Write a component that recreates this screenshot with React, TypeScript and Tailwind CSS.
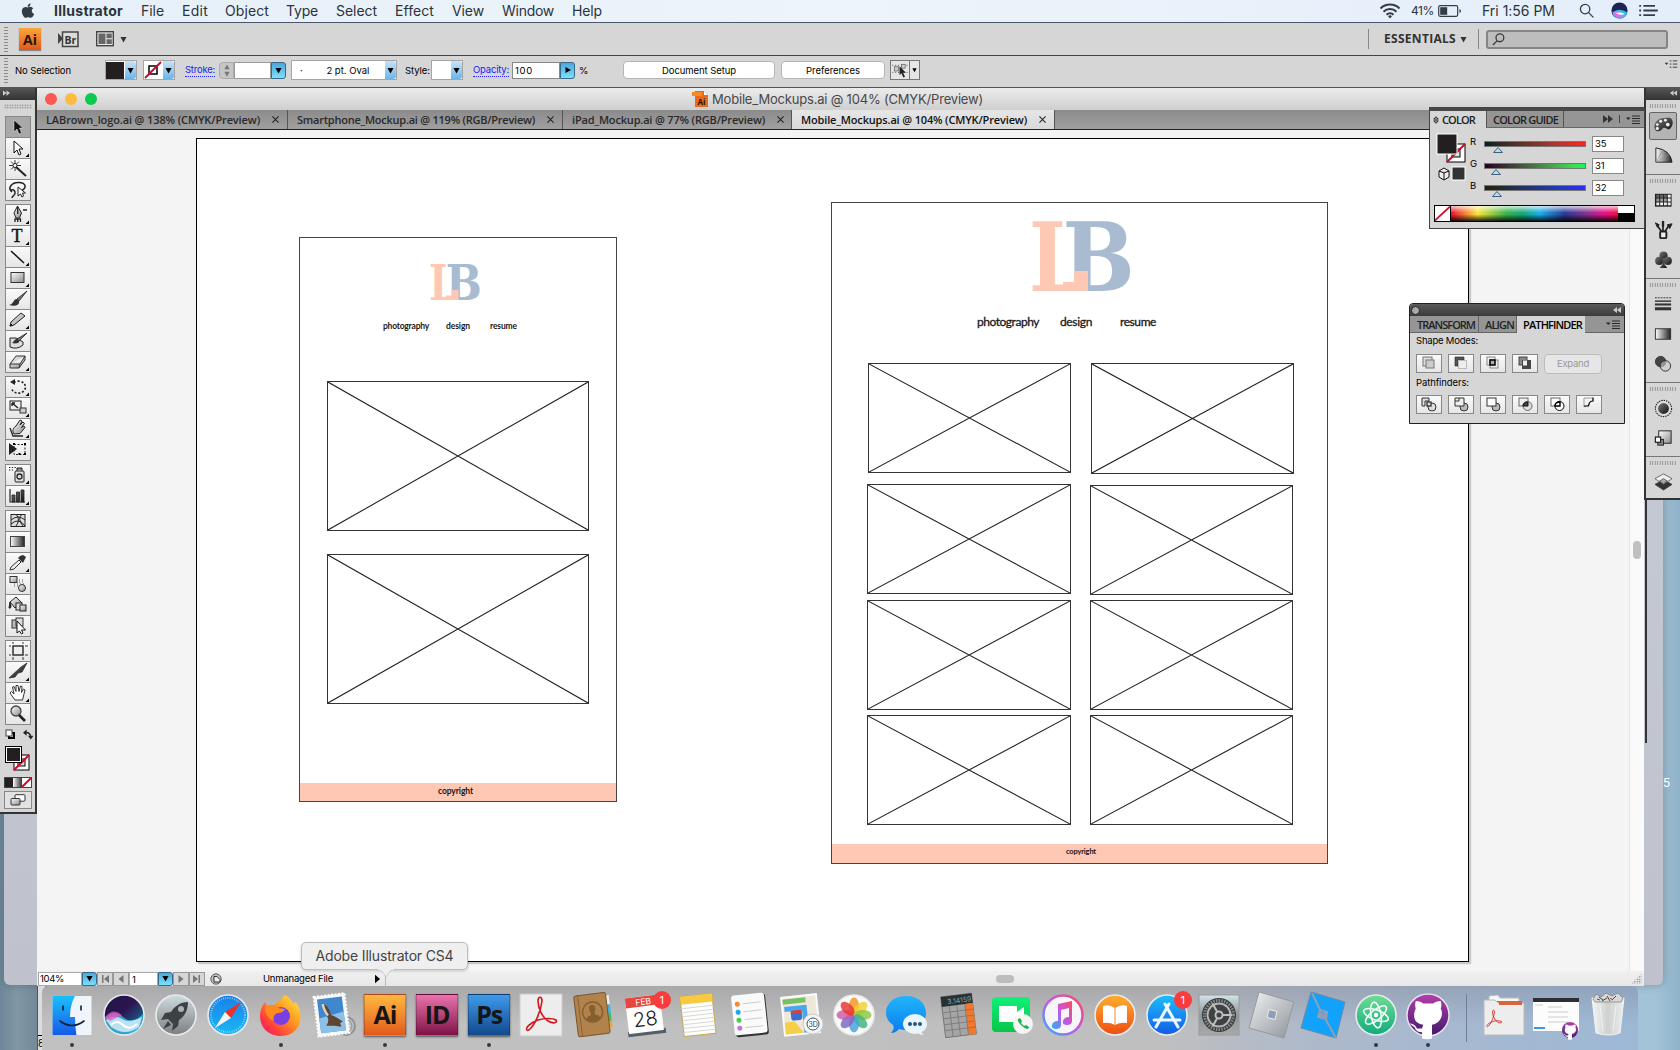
import React, { useLayoutEffect, useRef } from "react";

/* Text run whose tracking is tuned so that it fills a given width. */
function Fit({ w, className = "", children }: { w: number; className?: string; children: string }) {
  const ref = useRef<HTMLSpanElement>(null);
  useLayoutEffect(() => {
    const el = ref.current;
    if (!el) return;
    el.style.letterSpacing = "0px";
    const natural = el.getBoundingClientRect().width;
    el.style.letterSpacing = `${(w - natural) / Math.max(1, children.length)}px`;
  }, [w, children]);
  return (
    <span className={`block shrink-0 whitespace-nowrap ${className}`} style={{ width: w }}>
      <span ref={ref} className="inline-block">{children}</span>
    </span>
  );
}

function Defs() {
  return (
    <svg className="absolute h-0 w-0">
      <defs>
        <linearGradient id="gl" x1="0" y1="0" x2="1" y2="1"><stop offset="0" stopColor="#fff" /><stop offset="1" stopColor="#8a8a8a" /></linearGradient>
        <linearGradient id="gd" x1="0" y1="0" x2="1" y2="1"><stop offset="0" stopColor="#777" /><stop offset="1" stopColor="#111" /></linearGradient>
        <linearGradient id="gh" x1="0" y1="0" x2="1" y2="0"><stop offset="0" stopColor="#fff" /><stop offset="1" stopColor="#222" /></linearGradient>
        <linearGradient id="blue" x1="0" y1="0" x2="0" y2="1"><stop offset="0" stopColor="#1ac0fb" /><stop offset="1" stopColor="#1659e8" /></linearGradient>
        <linearGradient id="saf" x1="0" y1="0" x2="0" y2="1"><stop offset="0" stopColor="#1b7fe8" /><stop offset="1" stopColor="#19b8f5" /></linearGradient>
        <linearGradient id="siri" x1="0" y1="0" x2="1" y2="1"><stop offset="0" stopColor="#221546" /><stop offset=".45" stopColor="#2b1550" /><stop offset="1" stopColor="#128ca6" /></linearGradient>
        <linearGradient id="rocket" x1="0" y1="0" x2="0" y2="1"><stop offset="0" stopColor="#cfdcdf" /><stop offset="1" stopColor="#7d7f80" /></linearGradient>
        <linearGradient id="fox" x1="1" y1="0" x2="0" y2="1"><stop offset="0" stopColor="#fff04a" /><stop offset=".4" stopColor="#ff9a1f" /><stop offset=".75" stopColor="#ff3b3f" /><stop offset="1" stopColor="#e6146e" /></linearGradient>
        <linearGradient id="grn" x1="0" y1="0" x2="0" y2="1"><stop offset="0" stopColor="#12f077" /><stop offset="1" stopColor="#06c548" /></linearGradient>
        <linearGradient id="msg" x1="0" y1="0" x2="0" y2="1"><stop offset="0" stopColor="#22b5fb" /><stop offset="1" stopColor="#0a7df0" /></linearGradient>
        <linearGradient id="note" x1="1" y1="0" x2="0" y2="1"><stop offset="0" stopColor="#fb4a5e" /><stop offset=".5" stopColor="#c355e8" /><stop offset="1" stopColor="#27b5fa" /></linearGradient>
        <linearGradient id="book" x1="0" y1="0" x2="0" y2="1"><stop offset="0" stopColor="#fdb02c" /><stop offset="1" stopColor="#ee4c14" /></linearGradient>
        <linearGradient id="atom" x1="0" y1="0" x2="0" y2="1"><stop offset="0" stopColor="#6fdc96" /><stop offset="1" stopColor="#10ab7c" /></linearGradient>
        <linearGradient id="git" x1="0" y1="0" x2="0" y2="1"><stop offset="0" stopColor="#b43fae" /><stop offset="1" stopColor="#43186a" /></linearGradient>
        <linearGradient id="steel" x1="0" y1="0" x2="0" y2="1"><stop offset="0" stopColor="#d3e4ea" /><stop offset=".5" stopColor="#8d9699" /><stop offset="1" stopColor="#a9a9a9" /></linearGradient>
        <linearGradient id="silver" x1="0" y1="0" x2="1" y2="1"><stop offset="0" stopColor="#f1f3f5" /><stop offset="1" stopColor="#8d9398" /></linearGradient>
        <linearGradient id="trash" x1="0" y1="0" x2="1" y2="0"><stop offset="0" stopColor="#f3f4f4" /><stop offset=".5" stopColor="#cfd1cf" /><stop offset="1" stopColor="#eceeee" /></linearGradient>
      </defs>
    </svg>
  );
}

const Down = ({ className = "" }: { className?: string }) => (
  <svg viewBox="0 0 8 8" className={`h-2 w-2 ${className}`}><path d="M.5 1h7L4 7.5z" fill="currentColor" /></svg>
);

/* ---------- macOS menu bar ---------- */
function MenuBar() {
  const items: [string, number, string][] = [
    ["File", 23, "ml-[18px]"], ["Edit", 26, "ml-[18px]"], ["Object", 44, "ml-[17px]"], ["Type", 32, "ml-[17px]"],
    ["Select", 41, "ml-[18px]"], ["Effect", 39, "ml-[18px]"], ["View", 32, "ml-[18px]"], ["Window", 52, "ml-[18px]"], ["Help", 30, "ml-[18px]"],
  ];
  return (
    <header className="flex h-[23px] shrink-0 items-center border-b border-[#47566a] bg-gradient-to-r from-[#e6f0f9] via-[#edf4fa] to-[#e4eefa] pb-px text-[14px] leading-[22px] text-[#2c333c]">
      <svg viewBox="0 0 24 24" className="ml-[18px] h-[17px] w-[18px] shrink-0" fill="#333b45"><path d="M18.7 12.8c0-2.6 2.1-3.8 2.2-3.9-1.2-1.8-3.1-2-3.7-2-1.6-.2-3.1.9-3.9.9s-2-.9-3.3-.9C8.200 7 6.600 8 5.600 9.500c-1.900 3.100-.5 7.800 1.300 10.300.9 1.300 2 2.700 3.400 2.600 1.400-.1 1.900-.9 3.500-.9s2.100.9 3.500.8c1.500 0 2.400-1.300 3.300-2.500 1-1.500 1.500-2.900 1.500-3-.1 0-3.400-1.200-3.400-4zM16 5.300c.7-.9 1.200-2.100 1.100-3.300-1.100 0-2.300.7-3.100 1.600-.7.8-1.300 2-1.100 3.200 1.200.1 2.400-.6 3.100-1.500z" /></svg>
      <Fit w={69} className="ml-[18px] font-bold">Illustrator</Fit>
      {items.map(([t, w, m]) => <Fit key={t} w={w} className={m}>{t}</Fit>)}
      <div className="grow" />
      <svg viewBox="0 0 22 16" className="h-4 w-[22px]" fill="none" stroke="#333c48" strokeWidth="2"><path d="M1.500 5.500a13.500 13.500 0 0 1 19 0M4.500 8.700a9.300 9.300 0 0 1 13 0M7.500 11.800a5 5 0 0 1 7 0" /><path d="M9 13.200a3 3 0 0 1 4 0L11 15.500z" fill="#333c48" stroke="none" /></svg>
      <Fit w={23} className="ml-[10px] text-[12px]">41%</Fit>
      <svg viewBox="0 0 24 12" className="ml-[4px] h-3 w-6"><rect x=".7" y=".7" width="19" height="10.600" rx="1.500" fill="none" stroke="#333c48" strokeWidth="1.200" /><rect x="2.200" y="2.200" width="7" height="7.600" fill="#333c48" /><path d="M21.500 4v4q1.500-.5 1.500-2t-1.500-2" fill="#333c48" /></svg>
      <Fit w={73} className="ml-[20px]">Fri 1:56 PM</Fit>
      <svg viewBox="0 0 16 16" className="ml-[24px] h-[15px] w-[15px]" fill="none" stroke="#333c48" strokeWidth="1.400"><circle cx="6.500" cy="6.500" r="5" /><path d="m10.300 10.300 5 5" /></svg>
      <svg viewBox="0 0 40 40" className="ml-[17px] h-[17px] w-[17px]"><circle cx="20" cy="20" r="19" fill="#1d2353" /><path d="M3 24q17-12 35 0-3 15-18 15Q5 38 3 24" fill="#2fc0ee" /><path d="M4 27q14-12 22 0t-12 8z" fill="#e26be8" /><path d="M10 26q12-3 22 2-10 5-22-2" fill="#fff" /></svg>
      <svg viewBox="0 0 20 14" className="ml-[11px] mr-[22px] h-[13px] w-[19px]" stroke="#333c48" strokeWidth="2"><path d="M0 2h2M0 7h2M0 12h2M4.500 2H17M4.500 7H20M4.500 12H17" /></svg>
    </header>
  );
}

const Grip = () => <div className="ml-1 h-[26px] w-[4px] shrink-0 bg-[radial-gradient(circle,#8a8a8a_0.7px,transparent_0.9px)] bg-[size:2px_3px]" />;

function AppBar() {
  return (
    <div className="flex h-[33px] shrink-0 items-center border-b border-[#444] bg-[#d6d6d6] text-[#333]">
      <Grip />
      <div className="ml-[11px] flex h-[22px] w-[22px] items-center justify-center bg-gradient-to-b from-[#fba63a] to-[#e0561a] font-['Open_Sans'] text-[14px] font-bold text-[#2a1608] shadow-[0_1px_1px_#888]">Ai</div>
      <svg viewBox="0 0 21 17" className="ml-[17px] h-[17px] w-[21px]"><path d="M0 2v11l5-5.500z" fill="#444" /><rect x="4.500" y="1" width="15.500" height="14.500" fill="#dcdcdc" stroke="#444" strokeWidth="1.500" /><text x="6.500" y="12.500" fontFamily="Open Sans" fontWeight="700" fontSize="10.500" fill="#333">Br</text></svg>
      <svg viewBox="0 0 18 16" className="ml-[17px] h-4 w-[18px]"><rect x=".7" y=".7" width="16.600" height="14" fill="#ececec" stroke="#444" strokeWidth="1.400" /><path d="M2.500 2.500h7v10.500h-7zM10.500 2.500h5.300v4.700h-5.300zM10.500 8.300h5.300v4.700h-5.300z" fill="#666" /></svg>
      <Down className="ml-[6px] h-[7px] w-[7px]" />
      <div className="grow" />
      <div className="h-5 w-px bg-[#888]" />
      <Fit w={72} className="ml-[15px] font-['Open_Sans'] text-[12px] font-bold">ESSENTIALS</Fit>
      <Down className="ml-[4px] h-[7px] w-[7px]" />
      <div className="ml-[11px] h-5 w-px bg-[#888]" />
      <div className="ml-[7px] mr-[12px] flex h-[19px] w-[182px] items-center rounded-[3px] border-2 border-[#858585] bg-[#bdbdbd]">
        <svg viewBox="0 0 14 14" className="ml-[4px] h-[13px] w-[13px]" fill="none" stroke="#3a3a3a" strokeWidth="1.400"><circle cx="8.500" cy="5.200" r="4.200" /><path d="M5.500 8.500 1 13" /></svg>
      </div>
    </div>
  );
}

function BlueDrop({ h = "h-[18px]", play = false, pale = false }: { h?: string; play?: boolean; pale?: boolean }) {
  return (
    <div className={`flex shrink-0 items-center justify-center rounded-r-[3px] ${h} ${pale ? "w-[11px] bg-gradient-to-b from-[#c7e2f8] to-[#68b5ea]" : "w-[15px] border border-[#38688a] bg-gradient-to-b from-[#4aa7dd] to-[#7de0fb]"} text-black`}>
      {play ? <svg viewBox="0 0 8 8" className="h-2 w-2"><path d="M1.500 1v6L7 4z" fill="#000" /></svg> : <Down className="h-[7px] w-[7px]" />}
    </div>
  );
}

function ControlBar() {
  const box = "flex h-5 shrink-0 items-center justify-between border border-[#a5a5a5] bg-white";
  return (
    <div className="flex h-[32px] shrink-0 items-center border-b border-[#555] bg-[#d6d6d6] pb-[3px] text-[9.500px] leading-[13px] text-black">
      <Grip />
      <Fit w={56} className="ml-[7px]">No Selection</Fit>
      <div className={`${box} ml-[34px] w-[32px]`}><div className="h-[17px] w-[18px] bg-[#231f20]" /><BlueDrop pale /></div>
      <div className={`${box} ml-[6px] w-[32px]`}>
        <svg viewBox="0 0 18 18" className="h-[18px] w-[18px]"><rect x="5" y="5" width="8" height="8" fill="none" stroke="#000" strokeWidth="1.500" /><path d="M1 17 17 1" stroke="#cf0a2c" strokeWidth="2" /></svg><BlueDrop pale />
      </div>
      <Fit w={30} className="ml-[10px] border-b border-dotted border-[#22f] text-[#2222f5]">Stroke:</Fit>
      <div className="ml-[4px] flex h-[17px] w-[15px] flex-col items-center justify-center gap-px rounded-l-[4px] border border-[#aaa] bg-[#c6c6c6] text-[#777]"><Down className="h-[6px] w-[6px] rotate-180" /><Down className="h-[6px] w-[6px]" /></div>
      <div className="h-[17px] w-[37px] border border-[#999] bg-white" /><BlueDrop h="h-[17px]" />
      <div className={`${box} ml-[5px] w-[106px]`}><span className="ml-2">·</span><Fit w={43} className="ml-2">2 pt. Oval</Fit><BlueDrop pale /></div>
      <Fit w={25} className="ml-[8px]">Style:</Fit>
      <div className={`${box} ml-[1px] w-[32px] justify-end`}><BlueDrop pale /></div>
      <Fit w={36} className="ml-[10px] border-b border-dotted border-[#22f] text-[#2222f5]">Opacity:</Fit>
      <div className="ml-[3px] h-[17px] w-[48px] border border-[#888] bg-white pl-[2px] pt-px"><Fit w={18}>100</Fit></div><BlueDrop h="h-[17px]" play />
      <Fit w={8} className="ml-[4px]">%</Fit>
      <div className="ml-[36px] flex h-[18px] w-[152px] items-center justify-center rounded-[4px] border border-[#b5b5b5] bg-white"><Fit w={74}>Document Setup</Fit></div>
      <div className="ml-[6px] flex h-[18px] w-[104px] items-center justify-center rounded-[4px] border border-[#b5b5b5] bg-white"><Fit w={54}>Preferences</Fit></div>
      <div className="ml-[5px] flex h-5 w-[30px] border border-[#777] bg-[#e6e6e6]">
        <svg viewBox="0 0 19 18" className="h-[18px] w-[19px] border-r border-[#777]"><path d="M1.500 4h16M1.500 11.500h16" stroke="#444" strokeDasharray="1 2" /><rect x="3.500" y="5.500" width="4.500" height="4.500" fill="#ccc" stroke="#666" strokeWidth=".8" /><rect x="11" y="3" width="4" height="4" fill="#ccc" stroke="#666" strokeWidth=".8" /><path d="M9 5v9.500l2-2 2 4.500 1.800-.8-2-4.200h3z" fill="#222" /></svg>
        <span className="flex grow items-center justify-center"><Down className="h-[6px] w-[5px]" /></span>
      </div>
      <svg viewBox="0 0 14 10" className="mb-[12px] ml-auto mr-[2px] h-[9px] w-[14px]" stroke="#333"><path d="M0 3h4L2 5.500z" fill="#333" stroke="none" /><path d="M5.500 1h2M9 1h5M5.500 4.500h2M9 4.500h5M5.500 8h2M9 8h5" /></svg>
    </div>
  );
}

/* ---------- tool icons, drawn in a 24x20 box ---------- */
const tools: Record<string, React.ReactNode> = {
  select: <path d="M8 3v12l3-3 2 5 2.500-1-2-5H17z" fill="#111" stroke="#eee" strokeWidth=".5" />,
  direct: <path d="M8 3v12l3-3 2 5 2-1-2-5h4z" fill="#fff" stroke="#111" />,
  wand: <g stroke="#222"><path d="M10 8l10 9" strokeWidth="2" /><path d="M9 1v11M3 6.500h12M5 2.500l8 8M13 2.500l-8 8" strokeWidth=".9" /><circle cx="9" cy="6.500" r="2" fill="#fff" /></g>,
  lasso: <g stroke="#222"><path d="M6 12C1 8 6 2 13 2.500s8 5 3 8M6 12c-3-2 2-4 3 0s-3 3-3 6" fill="none" strokeWidth="1.500" /><path d="M12 7v9l2.500-2 1.500 3 1.500-1-1-3h3z" fill="#fff" /></g>,
  pen: <g stroke="#222"><path d="M11.500 1 8 8l2 5h3.500l2-5z" fill="url(#gl)" /><path d="M11.700 2v7M9 17v-3h5.500v3M11.700 14v3M17 5h4" fill="none" strokeWidth="1.300" /></g>,
  type: <text x="5.500" y="16" fontFamily="Liberation Serif" fontSize="18" fill="#111" stroke="#111" strokeWidth=".4">T</text>,
  line: <path d="M5 4l13 12" stroke="#111" strokeWidth="1.500" />,
  rect: <rect x="5" y="4.500" width="13" height="10" fill="url(#gl)" stroke="#333" />,
  brush: <g><path d="M21 2 11 10l2 2z" fill="#777" stroke="#222" strokeWidth=".8" /><path d="M11 10c-4 0-3 5-8 6 6 2 11 0 10-4z" fill="#333" /></g>,
  pencil: <g stroke="#222"><path d="M5 12 15 3l4 3L8 15l-4 1z" fill="url(#gl)" /><path d="M4 16l1-2 1.500 1.500z" fill="#111" /></g>,
  blob: <g><path d="M4 7h6l7 4v3q-6 5-13 2z" fill="#ddd" stroke="#222" /><path d="M21 2 11 8l2 2z" fill="#777" stroke="#222" strokeWidth=".8" /><path d="M11 8c-3 0-3 3-5 4 4 1 8 0 7-2z" fill="#333" /></g>,
  eraser: <path d="M4 12 10 4h9l-5 8zM4 12v4h9l6-8V4M14 12l-1 4" fill="url(#gl)" stroke="#333" />,
  rotate: <g fill="none" stroke="#222" strokeWidth="1.600"><path d="M8 5.500a7 6 0 1 1-2 7" strokeDasharray="2 1.800" /><path d="M4 5l5-3v6z" fill="#222" stroke="none" /></g>,
  scale: <g stroke="#222"><rect x="4" y="3" width="11" height="9" fill="#eee" /><path d="M6 5l6 5M6 5h3M6 5v3" strokeWidth="1.400" /><rect x="14" y="10" width="6" height="5" fill="#ccc" opacity=".9" /></g>,
  warp: <g stroke="#222"><path d="M8 15c-2-3-1-6 2-8l4-6 2 1-2 4 3-3 1.500 1.500-3 4 2.500-1.500 1 1.500-5 6z" fill="url(#gl)" /><path d="M4 9l3 8h10" fill="none" strokeWidth="1.300" /></g>,
  free: <g><rect x="8" y="4.500" width="11" height="10" fill="none" stroke="#222" strokeDasharray="2 1.500" /><path d="M3 3v12l8-6z" fill="#222" /><path d="M7 3h2v2H7zM18 3h2v2h-2zM18 13h2v2h-2zM12.500 13h2v2h-2z" /></g>,
  spray: <g><rect x="9" y="6" width="9" height="11" rx="1" fill="#ddd" stroke="#222" /><path d="M11 6V3h5v3" fill="#888" stroke="#222" /><circle cx="13.500" cy="11.500" r="2.500" fill="none" stroke="#222" strokeWidth="1.300" /><path d="M3 2.500h7M3 5h5" stroke="#222" strokeDasharray="1.300 1.500" /></g>,
  graph: <g stroke="#222" strokeWidth=".8"><path d="M4 3v13h15" fill="none" strokeWidth="1.200" /><path d="M6 9h3v7H6zM10.500 6h3v10h-3zM15 4h3v12h-3z" fill="url(#gd)" /></g>,
  mesh: <g fill="none" stroke="#222"><rect x="5" y="3.500" width="14" height="12" fill="#ddd" /><path d="M5 9q7-6 14 0M5 13q8-7 14 2M10 3q5 6 0 12M16 3q-5 5 1 12" /></g>,
  gradient: <rect x="4.500" y="4.500" width="14" height="10" fill="url(#gh)" stroke="#444" />,
  eyedrop: <g><path d="M4 17l1-3 8-7 2 2-7 7z" fill="#eee" stroke="#333" /><path d="M12 5l5 5 1-2 2-4-3-2-3 1z" fill="#333" /></g>,
  blend: <g><rect x="4" y="2.500" width="7" height="6" fill="url(#gl)" stroke="#333" /><path d="M8 10h10M8 12h6M13 6h6M13 8h6" stroke="#555" strokeDasharray="1 2" /><circle cx="16" cy="14" r="3.500" fill="url(#gl)" stroke="#333" /></g>,
  live: <g stroke="#222"><path d="M10 2 16 8l-7 5-5-6z" fill="url(#gl)" /><path d="M4 7l-1 6q2 1 2-2z" fill="#222" /><rect x="10" y="8" width="6" height="7" fill="#ddd" /><rect x="14" y="10" width="6" height="6" fill="url(#gl)" /></g>,
  livesel: <g stroke="#333"><rect x="6" y="4" width="8" height="8" fill="#bbb" /><rect x="10" y="2" width="7" height="8" fill="#ddd" /><path d="M11 5v12l2.500-2 2 3 1.500-1-1.500-3h4z" fill="#fff" stroke="#111" /></g>,
  artboard: <g fill="none" stroke="#333"><rect x="7" y="5" width="10" height="9" fill="#eee" strokeWidth="1.500" /><path d="M7 1v2M17 1v2M7 16v3M17 16v3M3 5h2M3 14h2M19 5h3M19 14h3" /></g>,
  slice: <path d="M3 16 15 5l6-4-5 9-4 1-3 4z" fill="url(#gd)" stroke="#222" strokeWidth=".7" />,
  hand: <path d="M9 17 4 10l1.500-1.500L8 11 6.500 4 8 3.500l2 5 0-6h2l1 6 1.500-5.500 1.500.5-.5 6 2-3.500 1.500 1-2.500 10z" fill="#fff" stroke="#333" />,
  zoom: <g><circle cx="10" cy="7" r="5" fill="url(#gl)" stroke="#444" strokeWidth="1.300" /><path d="M13 11l6 6" stroke="#222" strokeWidth="2.600" /></g>,
};

const toolGroups = [
  ["select", "direct.", "wand", "lasso"],
  ["pen.", "type.", "line.", "rect.", "brush", "pencil.", "blob", "eraser."],
  ["rotate.", "scale.", "warp.", "free"],
  ["spray.", "graph."],
  ["mesh", "gradient", "eyedrop.", "blend", "live", "livesel"],
  ["artboard", "slice.", "hand.", "zoom"],
];

function Toolbar() {
  return (
    <aside className="flex h-[726px] w-[37px] shrink-0 flex-col items-start border-b-2 border-r-2 border-[#333] bg-[#d6d6d6]">
      <div className="h-[12px] w-full bg-gradient-to-b from-[#555] to-[#333]"><svg viewBox="0 0 8 6" className="ml-[3px] h-[10px] w-[7px]"><path d="M0 0v6l4-3zM4 0v6l4-3z" fill="#ccc" /></svg></div>
      <div className="ml-1 mt-[4px] h-[5px] w-[28px] bg-[radial-gradient(circle,#888_0.7px,transparent_0.9px)] bg-[size:2.500px_2.500px]" />
      <div className="ml-[5px] mt-[7px] flex flex-col gap-[3px]">
        {toolGroups.map((g, i) => (
          <div key={i} className="flex w-[26px] flex-col border border-t-0 border-[#888]">
            {g.map((t) => {
              const name = t.replace(".", "");
              return (
                <div key={t} className={`h-[21px] border-t border-[#888] ${t === "select" ? "bg-[#a8a8a8]" : "bg-gradient-to-b from-[#fafafa] to-[#e6e6e6]"}`}>
                  <svg viewBox="0 0 24 20" className="h-[20px] w-[24px]">{tools[name]}{t.endsWith(".") && <path d="M23 15.500v3.500h-3.500z" fill="#000" />}</svg>
                </div>
              );
            })}
          </div>
        ))}
      </div>
      <div className="ml-[5px] mt-[4px] flex w-[28px] justify-between">
        <svg viewBox="0 0 11 11" className="h-[11px] w-[11px]"><rect x="4" y="4" width="5" height="5" fill="none" stroke="#000" strokeWidth="2" /><rect x="1" y="1" width="6" height="6" fill="#fff" stroke="#444" /></svg>
        <svg viewBox="0 0 11 11" className="h-[11px] w-[10px]"><path d="M2 3.500q6-1 6.500 5" fill="none" stroke="#222" strokeWidth="1.600" /><path d="M0 3.500 4 0v7zM5.500 7h6l-3 4z" fill="#222" /></svg>
      </div>
      <svg viewBox="0 0 27 27" className="ml-[5px] mt-[6px] h-[27px] w-[27px]">
        <rect x="9" y="9" width="15" height="15" fill="#fff" stroke="#000" /><rect x="13" y="13" width="7" height="7" fill="#ddd" stroke="#000" /><path d="M9 24 24 9" stroke="#cf0a2c" strokeWidth="2" />
        <rect x=".5" y=".5" width="16" height="16" fill="#fff" stroke="#000" /><rect x="2" y="2" width="13" height="13" fill="#231f20" />
      </svg>
      <div className="ml-[4px] mt-[4px] flex h-[11px] w-[28px] border border-[#444]"><div className="grow bg-[#231f20]" /><div className="w-[9px] bg-gradient-to-r from-white to-[#333]" /><svg viewBox="0 0 9 9" className="h-[9px] w-[9px] bg-white"><path d="M0 9 9 0" stroke="#cf0a2c" strokeWidth="2" /></svg></div>
      <div className="ml-[4px] mt-[3px] flex h-[18px] w-[28px] items-center justify-center border border-[#888] bg-[#e2e2e2]"><svg viewBox="0 0 16 12" className="h-[12px] w-4" stroke="#333"><rect x="5" y=".7" width="10" height="6.500" rx="1" fill="#fff" /><rect x="1" y="4.500" width="9" height="6.500" rx="1" fill="url(#gl)" /></svg></div>
    </aside>
  );
}

/* ---------- artwork ---------- */
function Wire({ className }: { className: string }) {
  return (
    <div className={`absolute border border-[#333] ${className}`}>
      <svg viewBox="0 0 100 100" preserveAspectRatio="none" className="h-full w-full" stroke="#222" strokeWidth="1.100"><path d="M0 0 100 100M100 0 0 100" vectorEffect="non-scaling-stroke" /></svg>
    </div>
  );
}

function Logo({ className }: { className: string }) {
  return (
    <svg viewBox="0 0 102 70" className={`absolute overflow-visible ${className}`}>
      <text transform="translate(-4 70) scale(.82 1)" fontFamily="DejaVu Serif" fontWeight="700" fontSize="96" fill="#ffc8b4">L</text>
      <rect x="38" y="30" width="20" height="31" fill="#fff" />
      <text transform="translate(29.500 70) scale(.89 1)" fontFamily="DejaVu Serif" fontWeight="700" fontSize="96" fill="#a8bbd0">B</text>
      <path d="M30 70V61H41V50H55V70z" fill="#ffc8b4" />
    </svg>
  );
}

function Artwork() {
  const nav = "absolute font-['Lato'] text-[#1a1718]";
  const navLg = `${nav} text-[12px] leading-[16px] [-webkit-text-stroke:0.3px_#1a1718]`;
  return (
    <div className="relative grow overflow-hidden bg-[#f4f4f4]">
      {/* artboard */}
      <div className="absolute left-[159px] top-[8px] h-[824px] w-[1273px] border-[1.500px] border-black bg-white shadow-[2px_2px_1px_#c9c9c9]" />
      {/* phone mockup */}
      <div className="absolute left-[262px] top-[107px] h-[565px] w-[318px] border border-[#444]">
        <div className="absolute bottom-0 left-0 h-[18px] w-full bg-[#ffc8b4]" />
        <Logo className="left-[131px] top-[27px] h-[35px] w-[51px]" />
        <Fit w={46} className={`${nav} left-[83px] top-[82px] text-[8.500px] leading-[12px] font-bold`}>photography</Fit>
        <Fit w={24} className={`${nav} left-[146px] top-[82px] text-[8.500px] leading-[12px] font-bold`}>design</Fit>
        <Fit w={27} className={`${nav} left-[190px] top-[82px] text-[8.500px] leading-[12px] font-bold`}>resume</Fit>
        <Wire className="left-[27px] top-[143px] h-[150px] w-[262px]" />
        <Wire className="left-[27px] top-[316px] h-[150px] w-[262px]" />
        <Fit w={35} className={`${nav} bottom-[4px] left-[138px] text-[8.500px] leading-[12px] font-bold`}>copyright</Fit>
      </div>
      {/* tablet mockup */}
      <div className="absolute left-[794px] top-[72px] h-[662px] w-[497px] border border-[#444]">
        <div className="absolute bottom-0 left-0 h-[19px] w-full bg-[#ffc8b4]" />
        <Logo className="left-[201px] top-[18px] h-[70px] w-[102px]" />
        <Fit w={62} className={`${navLg} left-[145px] top-[111px]`}>photography</Fit>
        <Fit w={32} className={`${navLg} left-[228px] top-[111px]`}>design</Fit>
        <Fit w={36} className={`${navLg} left-[288px] top-[111px]`}>resume</Fit>
        <Wire className="left-[36px] top-[160px] h-[110px] w-[203px]" />
        <Wire className="left-[259px] top-[160px] h-[111px] w-[203px]" />
        <Wire className="left-[35px] top-[281px] h-[110px] w-[204px]" />
        <Wire className="left-[258px] top-[282px] h-[110px] w-[203px]" />
        <Wire className="left-[35px] top-[397px] h-[110px] w-[204px]" />
        <Wire className="left-[258px] top-[397px] h-[110px] w-[203px]" />
        <Wire className="left-[35px] top-[512px] h-[110px] w-[204px]" />
        <Wire className="left-[258px] top-[512px] h-[110px] w-[203px]" />
        <Fit w={30} className={`${nav} bottom-[6px] left-[234px] text-[7.500px] leading-[10px] font-bold`}>copyright</Fit>
      </div>
    </div>
  );
}

function DocumentWindow() {
  const tabs: [string, number, string, boolean][] = [
    ["LABrown_logo.ai @ 138% (CMYK/Preview)", 214, "w-[251px] pl-[9px]", false],
    ["Smartphone_Mockup.ai @ 119% (RGB/Preview)", 238, "w-[275px] pl-[9px]", false],
    ["iPad_Mockup.ai @ 77% (RGB/Preview)", 193, "w-[229px] pl-[9px]", false],
    ["Mobile_Mockups.ai @ 104% (CMYK/Preview)", 226, "w-[263px] pl-[9px]", true],
  ];
  return (
    <main className="flex h-[898px] w-[1607px] shrink-0 flex-col bg-[#ececec]">
      <div className="flex h-[22px] items-center bg-gradient-to-b from-[#ececec] to-[#cfcfcf]">
        <div className="ml-[8px] flex gap-[8px]"><i className="h-[12px] w-[12px] rounded-full bg-[#fc5753]" /><i className="h-[12px] w-[12px] rounded-full bg-[#fdbc40]" /><i className="h-[12px] w-[12px] rounded-full bg-[#09c94f]" /></div>
        <svg viewBox="0 0 16 16" className="ml-[595px] h-4 w-4"><path d="M3 0h9l4 4v12H3z" fill="#ea6a1c" /><path d="M0 1h10v4H0z" fill="#f58a2b" /><path d="M12 0v4h4z" fill="#fff" /><text x="5.500" y="13.500" fontSize="8" fontWeight="700" fontFamily="Open Sans" fill="#22120a">Ai</text></svg>
        <Fit w={271} className="ml-[4px] text-[13px] leading-[20px] text-[#484848]">Mobile_Mockups.ai @ 104% (CMYK/Preview)</Fit>
      </div>
      <div className="flex h-[20px] shrink-0 border-b border-[#222] bg-gradient-to-b from-[#8b8b8b] to-[#a0a0a0] font-['Open_Sans'] text-[11px] font-semibold leading-[18px] text-[#2a2a2a]">
        {tabs.map(([t, w, c, on]) => (
          <div key={t} className={`flex shrink-0 items-center border-r border-[#555] ${c} ${on ? "bg-gradient-to-b from-[#e6e6e6] to-[#d9d9d9] text-[#111]" : ""}`}>
            <Fit w={w}>{t}</Fit>
            <svg viewBox="0 0 8 8" className="ml-[12px] h-[7px] w-[7px] shrink-0" stroke="#222" strokeWidth="1.200"><path d="M.5.5l7 7M7.500.5l-7 7" /></svg>
          </div>
        ))}
      </div>
      <div className="flex h-[841px] shrink-0">
        <Artwork />
        <div className="flex w-[15px] shrink-0 flex-col items-center border-l border-[#e4e4e4] bg-[#fafafa] pt-[411px]"><div className="h-[18px] w-[8px] rounded-full bg-[#c0c0c0]" /></div>
      </div>
      <StatusBar />
    </main>
  );
}

function StatusBar() {
  const nav = "flex h-[14px] w-4 items-center justify-center border border-[#999] bg-[#d6d6d6] text-[#777]";
  return (
    <div className="flex h-[15px] shrink-0 items-center bg-gradient-to-b from-[#f0f0f0] to-[#e7e7e7] pl-px text-[9.500px] leading-[13px] text-black">
      <div className="flex h-[14px] w-[44px] items-center border border-[#aaa] bg-white pl-px"><Fit w={24}>104%</Fit></div>
      <BlueDrop h="h-[14px]" />
      <div className={nav}><svg viewBox="0 0 8 8" className="h-2 w-2"><path d="M1 0h1.500v8H1zM8 0v8L3 4z" fill="#777" /></svg></div>
      <div className={nav}><svg viewBox="0 0 8 8" className="h-2 w-2"><path d="M6.500 0v8l-5-4z" fill="#777" /></svg></div>
      <div className="h-[14px] w-[29px] border border-[#aaa] bg-white pl-[2px]">1</div>
      <BlueDrop h="h-[14px]" />
      <div className={nav}><svg viewBox="0 0 8 8" className="h-2 w-2"><path d="M1.500 0v8l5-4z" fill="#777" /></svg></div>
      <div className={nav}><svg viewBox="0 0 8 8" className="h-2 w-2"><path d="M7 0H5.500v8H7zM0 0v8l5-4z" fill="#777" /></svg></div>
      <svg viewBox="0 0 12 12" className="ml-[5px] h-3 w-3"><circle cx="6" cy="6" r="5.200" fill="#bbb" stroke="#666" /><path d="M4 3.500h3l3 3V9H4z" fill="#eee" stroke="#333" /></svg>
      <Fit w={70} className="ml-[41px]">Unmanaged File</Fit>
      <svg viewBox="0 0 6 10" className="ml-[42px] h-[10px] w-[5px]"><path d="M0 0v10l6-5z" /></svg>
      <div className="ml-[5px] h-[15px] w-px bg-[#bbb]" />
      <div className="ml-[610px] h-[8px] w-[18px] rounded-full bg-[#bdbdbd]" />
      <div className="ml-auto mr-[2px] h-[11px] w-[11px] bg-[radial-gradient(circle,#777_0.7px,transparent_0.9px)] bg-[size:2.500px_2.500px] [clip-path:polygon(100%_0,100%_100%,0_100%)]" />
    </div>
  );
}

/* ---------- right icon dock ---------- */
const dockSections: { h: string; icons: React.ReactNode[] }[] = [
  { h: "h-[75px]", icons: [
    <g><path d="M12 2C5 2 1 7 1.500 12s6 5 8 2 4-1 6 0 6-4 5-8.500S16 2 12 2" fill="url(#gd)" /><g fill="#eee"><circle cx="4.500" cy="13" r="1.600" /><circle cx="4.500" cy="9" r="1.400" /><circle cx="8" cy="5.500" r="1.600" /><circle cx="13" cy="4.500" r="1.500" /><circle cx="15.500" cy="9" r="2" /></g></g>,
    <g><path d="M3 3v15h17Q18 5 3 3" fill="url(#gh)" stroke="#222" /><path d="M3 18 11 5M3 18l14-8" stroke="#888" strokeWidth=".7" /></g> ] },
  { h: "h-[104px]", icons: [
    <g><rect x="2" y="4" width="17.500" height="13.500" fill="#222" /><path d="M3.500 9h3v3h-3zM7.500 9h3v3h-3zM11.500 9h3v3h-3z" fill="#999" /><path d="M3.500 5h3v3h-3zM7.500 5h3v3h-3zM11.500 5h3v3h-3z" fill="#666" /><path d="M15.500 5h3v3h-3zM15.500 9h3v3h-3zM3.500 13h3v3h-3zM7.500 13h3v3h-3zM11.500 13h3v3h-3zM15.500 13h3v3h-3z" fill="#f2f2f2" /></g>,
    <g stroke="#222"><path d="M9 12 4.500 6M10.500 12V3M12.500 12l4-6" strokeWidth="1.800" /><path d="M2.500 3l4 2-2 2.500zM15 5l5-1-2.500 5z" fill="#222" /><path d="M10.500 1v6" strokeWidth="2.500" /><rect x="7.500" y="12" width="6.500" height="7" rx="1" fill="#eee" strokeWidth="2" /></g>,
    <g fill="url(#gd)"><circle cx="11" cy="6" r="4.300" /><circle cx="6.500" cy="11.500" r="4.300" /><circle cx="15.500" cy="11.500" r="4.300" /><path d="M10 9h2l0 6 3 4H7l3-4z" /></g> ] },
  { h: "h-[104px]", icons: [
    <g stroke="#333"><path d="M2 4h17" strokeDasharray="2 1" /><path d="M2 7.500h17" strokeWidth="1.500" /><path d="M2 11h17" strokeWidth="2.200" /><path d="M2 15.500h17" strokeWidth="3.200" /></g>,
    <rect x="2.500" y="5" width="16" height="11" fill="url(#gh)" stroke="#333" />,
    <g stroke="#333"><circle cx="8" cy="8" r="5.500" fill="#444" /><circle cx="13" cy="12.500" r="5.500" fill="#ccc" fillOpacity=".6" /></g> ] },
  { h: "h-[74px]", icons: [
    <g><circle cx="11" cy="11" r="8.500" fill="#ddd" stroke="#222" strokeWidth="1.200" strokeDasharray="1.500 1" /><circle cx="11" cy="11" r="5.700" fill="url(#gd)" /></g>,
    <g stroke="#222"><rect x="6" y="3" width="13" height="13" fill="url(#gl)" /><rect x="5" y="12" width="6" height="6" fill="#888" /><rect x="2.500" y="9.500" width="5.500" height="5.500" fill="#fff" strokeWidth="1.300" /></g> ] },
  { h: "h-[44px]", icons: [
    <g stroke="#333" strokeWidth=".7"><path d="M11 8l9 5-9 6-9-6z" fill="#333" /><path d="M11 2l9 5-9 6-9-6z" fill="#f3f3f3" fillOpacity=".9" /><path d="M11 7l4 2.500-4 3-4-3z" fill="#aaa" /></g> ] },
];

function PanelDock() {
  return (
    <aside className="h-[412px] w-[36px] shrink-0 border-b-2 border-l-2 border-[#333] bg-[#d6d6d6]">
      <div className="flex h-[12px] justify-end bg-gradient-to-b from-[#555] to-[#333]"><svg viewBox="0 0 8 6" className="mr-[3px] h-[10px] w-[7px]"><path d="M4 0v6L0 3zM8 0v6L4 3z" fill="#ccc" /></svg></div>
      {dockSections.map((s, i) => (
        <section key={i} className={`${s.h} ${i < 4 ? "border-b border-[#777]" : ""} flex flex-col items-center`}>
          <div className="mt-[4px] h-[4px] w-[28px] shrink-0 bg-[radial-gradient(circle,#888_0.7px,transparent_0.9px)] bg-[size:2.500px_2px]" />
          <div className={`flex flex-col ${i === 0 ? "mt-[4px]" : "mt-[2px]"}`}>
            {s.icons.map((ic, k) => (
              <div key={k} className={`flex w-[28px] items-center justify-center ${i === 0 && k === 0 ? "h-[28px] rounded-[2px] border border-[#666] bg-[#b5b5b5]" : "h-[30px]"}`}>
                <svg viewBox="0 0 22 21" className="h-[20px] w-[21px]">{ic}</svg>
              </div>
            ))}
          </div>
        </section>
      ))}
    </aside>
  );
}

/* ---------- floating panels ---------- */
const MenuGlyph = ({ className = "" }: { className?: string }) => (
  <svg viewBox="0 0 14 9" className={`h-[9px] w-[14px] shrink-0 ${className}`} stroke="#222"><path d="M0 2.500h4.500L2.200 5z" fill="#222" stroke="none" /><path d="M6 1h8M6 3.500h8M6 6h8M6 8.500h8" strokeWidth=".9" /></svg>
);

function ColorPanel() {
  const rows: [string, string, string, string][] = [
    ["R", "35", "bg-gradient-to-r from-[#001f20] to-[#ff1f20]", "ml-[9px]"],
    ["G", "31", "bg-gradient-to-r from-[#230020] to-[#00ff50]", "ml-[7px]"],
    ["B", "32", "bg-gradient-to-r from-[#231f00] to-[#2c2cff]", "ml-[8px]"],
  ];
  return (
    <div className="absolute left-[1429px] top-[107px] flex h-[122px] w-[216px] flex-col border border-[#444] bg-[#d6d6d6] font-['Open_Sans']">
      <div className="h-[3px] bg-[#484848]" />
      <div className="flex h-[17px] shrink-0 border-b border-[#666] bg-[#959595] text-[11px] font-semibold leading-[17px] text-[#222]">
        <div className="flex h-[17px] w-[56px] items-center bg-[#d6d6d6] pl-[3px]"><svg viewBox="0 0 6 9" className="mr-[3px] h-[8px] w-[6px]" fill="none" stroke="#111"><path d="M.5 3.500 3 .8l2.500 2.700zM.5 5.500 3 8.200l2.500-2.700z" /></svg><Fit w={33}>COLOR</Fit></div>
        <div className="w-[78px] border-x border-[#555] pl-[6px]"><Fit w={65}>COLOR GUIDE</Fit></div>
        <div className="flex grow items-center justify-end"><svg viewBox="0 0 10 8" className="h-2 w-[10px]"><path d="M0 0v8l5-4zM5 0v8l5-4z" fill="#333" /></svg><div className="mx-[6px] h-2 w-px bg-[#444]" /><MenuGlyph className="mr-[4px]" /></div>
      </div>
      <div className="flex pt-[5px]">
        <svg viewBox="0 0 32 50" className="ml-[6px] h-[50px] w-[32px] shrink-0">
          <rect x="11" y="11" width="18" height="18" fill="#fff" stroke="#000" /><rect x="16" y="16" width="8" height="8" fill="#ddd" stroke="#000" /><path d="M11 29 29 11" stroke="#cf0a2c" strokeWidth="2" />
          <rect x="1" y="1" width="20" height="20" fill="#231f20" stroke="#fff" />
          <path d="M3 38l5-3 5 3v6l-5 3-5-3zM3 38l5 2 5-2M8 40v7" fill="#eee" stroke="#111" /><rect x="16" y="34" width="13" height="13" fill="#333" stroke="#fff" />
        </svg>
        <div className="ml-[2px] flex flex-col text-[9.500px] leading-[14px] text-black">
          {rows.map(([l, v, g, m]) => (
            <div key={l} className="flex h-[22px] w-[160px] items-start font-['Inter']">
              <span className="w-[14px] pt-[2px]">{l}</span>
              <div className="w-[102px] pt-[8px]"><div className={`h-[6px] border border-[#777] ${g}`} /><svg viewBox="0 0 10 6" className={`h-[6px] w-[10px] ${m}`}><path d="M5 .5 9.500 5.500h-9z" fill="#b5dcf4" stroke="#3f5f78" /></svg></div>
              <div className="ml-[6px] mt-[3px] h-[16px] w-[32px] border border-[#888] bg-white pl-[2px]">{v}</div>
            </div>
          ))}
        </div>
      </div>
      <div className="ml-[4px] mt-[6px] flex h-[17px] w-[201px] shrink-0 border border-black">
        <svg viewBox="0 0 16 15" className="h-[15px] w-4 border-r border-black bg-white"><path d="M0 15 16 0" stroke="#cf0a2c" strokeWidth="1.800" /></svg>
        <div className="grow bg-[linear-gradient(to_bottom,rgba(255,255,255,.75),transparent_45%,transparent_55%,rgba(0,0,0,.85)),linear-gradient(to_right,#f01030,#fbe63c_16%,#39b54a_33%,#18a878_43%,#18b0ea_53%,#2a3a98_68%,#8a3090_82%,#e8128a_92%,#f01040)]" />
        <div className="h-full w-[16px] bg-gradient-to-b from-white from-50% to-black to-50%" />
      </div>
    </div>
  );
}

function PathfinderPanel() {
  const modes = [
    <g><rect x="3" y="2" width="9" height="9" fill="#ddd" stroke="#777" /><rect x="6" y="5" width="8" height="8" fill="#ccc" stroke="#777" /></g>,
    <g><path d="M3 2h9v3H6v6H3z" fill="#555" stroke="#222" strokeWidth=".6" /><rect x="6.500" y="5.500" width="8" height="8" fill="#eee" stroke="#bbb" /></g>,
    <g><rect x="3" y="2" width="8" height="8" fill="#eee" stroke="#888" /><rect x="6" y="5" width="8" height="8" fill="#eee" stroke="#888" /><rect x="6" y="5" width="5" height="5" fill="#aaa" stroke="#000" strokeWidth="1.500" /></g>,
    <g><rect x="3" y="2" width="8" height="8" fill="#888" stroke="#444" /><rect x="6" y="5" width="9" height="9" fill="#444" /><rect x="7" y="5.500" width="4" height="5" fill="#eee" /></g>,
  ];
  const finders = [
    <g fill="#ddd" stroke="#333"><path d="M2 2h7v3H5v5H2z" /><circle cx="12" cy="11" r="4" /><rect x="7" y="6" width="4" height="4" strokeWidth="1.300" /></g>,
    <g fill="#eee" stroke="#333"><circle cx="12" cy="11" r="4" fill="#bbb" /><path d="M3 5V2h9v8H3V5h4V2" /></g>,
    <g stroke="#333"><circle cx="12" cy="11" r="4" fill="#bbb" /><rect x="3" y="2" width="9" height="8" fill="#fff" /></g>,
    <g stroke="#666"><rect x="3" y="2" width="9" height="8" fill="#eee" /><circle cx="11.500" cy="10" r="4.500" fill="#ddd" /><path d="M7 10q0-4 5-4v4z" fill="#444" stroke="#111" /></g>,
    <g stroke="#000" fill="#fff"><rect x="3" y="2" width="9" height="8" stroke="#666" /><circle cx="11.500" cy="10" r="4.500" /><path d="M7 10q0-4 5-4v4z" strokeWidth="1.400" /></g>,
    <g stroke="#111"><path d="M4 11V2h9v3q-4 0-4 4l-5 2" fill="#f4f4f4" stroke="#999" /><path d="M13 1.500V5Q9 5 8.500 10H4" fill="none" strokeWidth="1.200" /></g>,
  ];
  const btn = "h-[19px] w-[26px] border border-[#888] bg-gradient-to-b from-[#fafafa] to-[#e6e6e6]";
  return (
    <div className="absolute left-[1409px] top-[303px] flex h-[121px] w-[216px] flex-col rounded-t-[4px] border border-[#222] bg-[#d6d6d6]">
      <div className="flex h-[12px] shrink-0 items-center justify-between rounded-t-[3px] bg-gradient-to-b from-[#5a5a5a] to-[#3c3c3c]"><i className="ml-px h-[9px] w-[9px] rounded-full border border-[#222] bg-[#aaa]" /><svg viewBox="0 0 8 6" className="mr-[3px] h-[6px] w-[8px]"><path d="M4 0v6L0 3zM8 0v6L4 3z" fill="#ccc" /></svg></div>
      <div className="flex h-[17px] shrink-0 border-b border-[#666] bg-[#959595] font-['Open_Sans'] text-[11px] font-semibold leading-[17px] text-[#222]">
        <div className="w-[69px] border-r border-[#666] pl-[7px]"><Fit w={58}>TRANSFORM</Fit></div>
        <div className="w-[38px] border-r border-[#666] pl-[6px]"><Fit w={29}>ALIGN</Fit></div>
        <div className="h-[17px] w-[68px] bg-[#d6d6d6] pl-[6px] text-black"><Fit w={59}>PATHFINDER</Fit></div>
        <div className="flex grow items-center justify-end"><MenuGlyph className="mr-[4px]" /></div>
      </div>
      <div className="pl-[6px] text-[9.500px] leading-[14px] text-black">
        <Fit w={62} className="mt-px">Shape Modes:</Fit>
        <div className="mt-[6px] flex h-[19px] gap-[6px]">
          {modes.map((m, i) => <div key={i} className={btn}><svg viewBox="0 0 18 16" className="mx-auto h-[16px] w-[18px]">{m}</svg></div>)}
          <div className="flex h-[20px] w-[58px] items-center justify-center rounded-[4px] border border-[#bbb] bg-[#e6e6e6] text-[#999]"><Fit w={32}>Expand</Fit></div>
        </div>
        <Fit w={53} className="mt-[3px]">Pathfinders:</Fit>
        <div className="mt-[5px] flex h-[19px] gap-[6px]">{finders.map((m, i) => <div key={i} className={btn}><svg viewBox="0 0 18 16" className="mx-auto h-[16px] w-[18px]">{m}</svg></div>)}</div>
      </div>
    </div>
  );
}

/* ---------- macOS dock ---------- */
const Tile = ({ t, c }: { t: string; c: string }) => (
  <div className={`flex h-[42px] w-[42px] items-center justify-center border border-black/20 font-['Open_Sans'] text-[25px] font-bold tracking-[-1px] text-[#161616] shadow-[0_1px_2px_#555] ${c}`}>{t}</div>
);
const Svg = ({ children }: { children: React.ReactNode }) => <svg viewBox="0 0 44 44" className="h-[44px] w-[44px] overflow-visible">{children}</svg>;
const Disc = ({ f }: { f: string }) => <circle cx="22" cy="22" r="20" fill={f} stroke="#e9eced" strokeWidth="1.600" />;
const Cat = () => <path d="M13 12q4 0 6 2h8q2-2 6-2 1 3 0 6 2 4 0 8-2 4-7 5v11q-4 1-8 0v-5q-5 0-6-4l-4-3q4 0 6 4h4l1-3q-6-1-7-5-1-4 1-8-1-3 0-6" fill="#fff" />;
const Acro = () => <path d="M8 37c-2-2 3-7 11-10 7-2 15-2 18 0 2 3-3 4-8 1-6-4-10-13-10-20 0-5 4-5 4 0-1 9-6 22-12 28-1 1-2 2-3 1z" fill="none" stroke="#d3161c" strokeWidth="1.600" />;

const apps: [string, boolean, React.ReactNode][] = [
  ["finder", true, <Svg><rect x="2.500" y="3" width="39" height="39" fill="#f0f5fb" /><path d="M2.500 3H25q-5 9-5 21h5q0 10 1.500 18h-24z" fill="url(#blue)" /><path d="M10 28q12 9 24 0M13 13v4M31 13v4" fill="none" stroke="#123" strokeWidth="1.600" strokeLinecap="round" /></Svg>],
  ["siri", false, <Svg><Disc f="url(#siri)" /><path d="M3 25q9-9 18-1t20-3q0 20-19 20-16 0-19-16" fill="#35bfe6" opacity=".8" /><path d="M4 27q9-6 16-1t20-2l-3 10q-14 10-28 0z" fill="#e9f6ff" opacity=".75" /><path d="M3 24q8-10 17-2l-12 6z" fill="#ea55c0" opacity=".75" /><path d="M9 32q6-6 12 0t14-1" fill="none" stroke="#fff" strokeWidth="2" /></Svg>],
  ["launchpad", false, <Svg><Disc f="url(#rocket)" /><path d="M34 9c-8 0-14 5-17 10l-6 1-4 7 7-1 5 5-1 7 6-5 1-6c6-4 9-10 9-18" fill="#3c4145" /><circle cx="27" cy="16" r="3" fill="#aab5b8" /><path d="M14 28l-5 8 8-4z" fill="#3c4145" /></Svg>],
  ["safari", false, <Svg><Disc f="url(#saf)" /><circle cx="22" cy="22" r="17" fill="none" stroke="#bfe3fb" strokeWidth="2" strokeDasharray=".6 1.600" /><path d="M35 9 19 19l6 6z" fill="#e8302c" /><path d="M9 35l10-16 6 6z" fill="#f4f4f4" /></Svg>],
  ["firefox", true, <Svg><path d="M22 43C9 43 1 34 1 23c0-6 2-10 5-14l2 4q4-2 8-1c2-4 7-4 9-10 6 2 8 6 9 9l3-2c9 13 5 34-15 34" fill="url(#fox)" /><circle cx="22" cy="23" r="9" fill="#7a3fe0" /><path d="M6 14q8-3 13 1l7 1q-2 4-7 4-6 2-4 8Q6 25 6 14" fill="#ff8b1c" /></Svg>],
  ["mail", false, <Svg><circle cx="35" cy="33" r="9" fill="none" stroke="#8d9399" strokeWidth="2" /><circle cx="35" cy="33" r="6" fill="none" stroke="#8d9399" /><g transform="rotate(-7 20 22)"><rect x="5" y="2" width="31" height="40" fill="#f8f8f8" stroke="#fff" strokeWidth="2" strokeDasharray="2 1.500" /><rect x="8" y="5" width="25" height="34" fill="#3f88d0" /><path d="M8 24l25-4v19H8z" fill="#8dc0e6" /><path d="M12 9q7 3 8 13 6 3 11 8l-3 1 1 4-7-2-8-1q4-4 2-9-4-6-4-14" fill="#5e4630" /><path d="M13 10q1 8 4 12" stroke="#d9d2c6" strokeWidth="2.500" fill="none" /></g></Svg>],
  ["ai", true, <Tile t="Ai" c="bg-gradient-to-b from-[#fdb840] to-[#e2591d]" />],
  ["id", false, <Tile t="ID" c="bg-gradient-to-b from-[#ea72ad] to-[#7f1148]" />],
  ["ps", true, <Tile t="Ps" c="bg-gradient-to-b from-[#3f9bea] to-[#124a8f]" />],
  ["acrobat", false, <Svg><rect x="1" y="1" width="42" height="42" fill="#ededed" stroke="#ccc" /><Acro /></Svg>],
  ["contacts", false, <Svg><g transform="rotate(-7 22 22)"><rect x="36" y="4" width="4" height="9" fill="#eee" /><rect x="36" y="14" width="4" height="8" fill="#37b6e6" /><rect x="36" y="22" width="4" height="8" fill="#45c15c" /><rect x="36" y="30" width="4" height="6" fill="#f2a532" /><rect x="5" y="1" width="32" height="41" rx="2" fill="#b1824b" stroke="#7a5629" /><path d="M9 1v41" stroke="#8b6332" /><circle cx="22" cy="19" r="10" fill="none" stroke="#85602f" strokeWidth="1.500" /><path d="M15 26q1-4 5-4v-2q-3-8 2-8t2 8v2q4 0 5 4-7 5-14 0" fill="#85602f" /></g></Svg>],
  ["calendar", false, <Svg><g transform="rotate(-7 22 22)"><path d="M2 37h38v5H2z" fill="#555f66" /><rect x="3" y="3" width="35" height="36" rx="1" fill="#fff" /><path d="M3 3h35v10H3z" fill="#e8453e" /><text x="13" y="11.500" fontSize="8.500" fill="#fff" fontFamily="Inter">FEB</text><text x="8.500" y="33" fontSize="20" fontFamily="Inter" fontWeight="300" fill="#222">28</text></g><circle cx="38" cy="7" r="9" fill="#fb3b3e" /><text x="35.500" y="11" fontSize="11" fill="#fff" fontFamily="Inter">1</text></Svg>],
  ["notes", false, <Svg><g transform="rotate(-6 22 22)"><rect x="6" y="2" width="32" height="40" fill="#fdfdfb" stroke="#c8a646" /><path d="M6 2h32v8H6z" fill="#f8ca42" /><path d="M6 14h32M6 18h32M6 22h32M6 26h32M6 30h32M6 34h32M6 38h32" stroke="#d8d8d8" /></g></Svg>],
  ["reminders", false, <Svg><g transform="rotate(-6 22 22)"><rect x="6" y="2" width="33" height="41" rx="3" fill="#333" /><rect x="5" y="1" width="33" height="40" rx="3" fill="#fafafa" /><path d="M16 10h18M16 18h18M16 26h18M16 34h18" stroke="#ccc" /><circle cx="10.500" cy="10" r="2.500" fill="#f6883a" /><circle cx="10.500" cy="18" r="2.500" fill="#1ba7f5" /><circle cx="10.500" cy="26" r="2.500" fill="#4cca4c" /><circle cx="10.500" cy="34" r="2.500" fill="#c873dc" /></g></Svg>],
  ["maps", false, <Svg><g transform="rotate(-6 20 22)"><rect x="3" y="3" width="35" height="38" fill="#eee7da" stroke="#fafafa" strokeWidth="2" /><path d="M4 5h23v5H4z" fill="#76c163" /><path d="M5 15h20v25" stroke="#4aa6ee" strokeWidth="5" fill="none" /><path d="M4 28l10 0 8 12H4z" fill="#f6cf48" /><rect x="11" y="17" width="11" height="10" rx="3" fill="#3a6fcf" /><path d="M11 17h11v3H11z" fill="#da4037" /></g><circle cx="33" cy="31" r="10" fill="#f4f4f4" stroke="#ccc" /><circle cx="33" cy="31" r="6" fill="#fff" stroke="#357" /><text x="28.500" y="34" fontSize="7" fontFamily="Inter" fill="#333">3D</text></Svg>],
  ["photos", false, <Svg><Disc f="#fafafa" />{["#f7941e", "#f2d22e", "#8dc63f", "#3fb57c", "#46a2d8", "#7b68c4", "#c85aa8", "#e8352e"].map((c, i) => <ellipse key={c} cx="22" cy="13" rx="5" ry="8.500" fill={c} fillOpacity=".82" transform={`rotate(${i * 45} 22 22)`} />)}</Svg>],
  ["messages", false, <Svg><path d="M22 3c12 0 20 7 20 17s-8 17-20 17q-4 0-7-1-3 4-8 4 4-4 2-8Q2 27 2 20C2 10 10 3 22 3" fill="url(#msg)" /><ellipse cx="31" cy="31" rx="12" ry="10" fill="#e9f5fd" /><path d="M37 38q1 3 3 4-5 0-7-3" fill="#e9f5fd" /><g fill="#27557d"><circle cx="26" cy="31" r="2" /><circle cx="31" cy="31" r="2" /><circle cx="36" cy="31" r="2" /></g></Svg>],
  ["calculator", false, <Svg><g transform="rotate(-7 22 22)"><rect x="7" y="2" width="31" height="41" fill="#a5a5a5" stroke="#555" strokeWidth=".6" /><path d="M7 2h31v10H7z" fill="#263136" /><text x="13" y="10" fontSize="7" fill="#8da0a6" fontFamily="Inter">3.14159</text><path d="M30 12h8v31h-8z" fill="#f3772c" /><path d="M7 18h31M7 24h31M7 30h31M7 36h31M14.500 12v31M22 12v31M30 12v31" stroke="#777" strokeWidth=".8" /></g></Svg>],
  ["facetime", false, <Svg><rect x="3" y="4" width="38" height="35" rx="4" fill="url(#grn)" /><path d="M10 13h18v6l7-5v15l-7-5v5H10z" fill="#fff" /><circle cx="34" cy="31" r="10" fill="#f5f5f5" /><path d="M29 26q-1 2 3 6t7 4l1-2-3-2-2 1-3-3 1-2-2-3z" fill="#18b64b" /></Svg>],
  ["itunes", false, <Svg><circle cx="22" cy="22" r="19.500" fill="#f6f6f8" stroke="url(#note)" strokeWidth="2.500" /><path d="M17 11l14-3v20q0 4-5 4t-4-4 6-4v-9l-8 2v15q0 4-5 4t-4-4 6-4z" fill="url(#note)" /></Svg>],
  ["ibooks", false, <Svg><Disc f="url(#book)" /><path d="M22 15q-6-4-12-2v17q7-1 12 2 5-3 12-2V13q-6-2-12 2" fill="#fff" /><path d="M22 15v17" stroke="#e88a3c" /></Svg>],
  ["appstore", false, <Svg><Disc f="url(#blue)" /><path d="M11 34 24 11M33 34 20 11M9 27h26" stroke="#eef7ff" strokeWidth="3" strokeLinecap="round" /><circle cx="38" cy="7" r="9" fill="#fb3b3e" /><text x="35.500" y="11" fontSize="11" fill="#fff" fontFamily="Inter">1</text></Svg>],
  ["settings", false, <Svg><rect x="2" y="2" width="40" height="40" fill="url(#steel)" stroke="#999" /><circle cx="22" cy="22" r="17" fill="#3a3d3e" /><circle cx="22" cy="22" r="14.500" fill="none" stroke="#888" strokeWidth="3" strokeDasharray="1.500 1.200" /><circle cx="22" cy="22" r="11.500" fill="#3f4243" stroke="#b8b8b8" strokeWidth="2" /><circle cx="22" cy="22" r="3.500" fill="none" stroke="#c0c0c0" strokeWidth="2" /><path d="M26 22h9M20 18.500l-4.500-8M20 25.500l-4.500 8" stroke="#c0c0c0" strokeWidth="2" /></Svg>],
  ["roblox", false, <Svg><path d="M10-1 45 9 35 45 0 35z" fill="url(#silver)" stroke="#999" /><path d="M20 16.500l8 2-2 8-8-2z" fill="#8f9fb8" stroke="#eee" /></Svg>],
  ["studio", false, <Svg><path d="M10-1 44 9 35 45 0 35z" fill="#12a2fb" stroke="#6f8aa3" /><path d="M11 0l8 17 7 2-1 8 10 18M19 17l-2 7 8 2" stroke="#8d9fb6" strokeWidth="2" fill="#8d9fb6" /></Svg>],
  ["atom", true, <Svg><Disc f="url(#atom)" /><g fill="none" stroke="#f2fff8" strokeWidth="1.600"><ellipse cx="22" cy="22" rx="13" ry="5" transform="rotate(20 22 22)" /><ellipse cx="22" cy="22" rx="13" ry="5" transform="rotate(80 22 22)" /><ellipse cx="22" cy="22" rx="13" ry="5" transform="rotate(140 22 22)" /></g><circle cx="22" cy="22" r="2.200" fill="#fff" /></Svg>],
  ["github", true, <Svg><circle cx="22" cy="22" r="21" fill="url(#git)" stroke="#e6e0ec" strokeWidth="1.500" /><g transform="translate(-6.500 -7) scale(1.250)"><Cat /></g></Svg>],
];

function MacDock() {
  return (
    <footer className="relative ml-[42px] flex h-[64px] w-[1596px] shrink-0 rounded-t-[6px] bg-[linear-gradient(to_bottom,rgba(100,100,110,.25),transparent_60%),linear-gradient(to_right,#c1c1c1,#bfbfbf_70%,#adb9cb_80%,#9db8d6)] pl-[4px]">
      {apps.map(([n, run, icon]) => (
        <div key={n} className="flex w-[52.150px] shrink-0 flex-col items-center pt-[7px]">
          <div className="flex h-[44px] items-center">{icon}</div>
          {run && <i className="mt-[6px] h-[4px] w-[4px] rounded-full bg-[#333b42]" />}
        </div>
      ))}
      <div className="ml-[12px] mt-[8px] h-[48px] w-px bg-[#6c809a]" />
      <div className="ml-[15px] mt-[7px]"><Svg><path d="M7 8V3l9-1 2 3h19v8" fill="#f6f6f6" stroke="#bbb" /><path d="M12 8h28v8H12z" fill="#d9653a" /><path d="M2 13V7h11l3 3h26v32H2z" fill="#ededed" stroke="#bbb" /><path d="M17 9h23v3H17z" fill="#d9653a" /><g transform="translate(1 15) scale(.5)"><Acro /></g></Svg></div>
      <div className="ml-[7px] mt-[7px]"><Svg><rect x="0" y="5" width="46" height="33" fill="#fcfcfc" /><path d="M0 5h46v4H0z" fill="#2c3036" /><path d="M15 14h14M15 19h20M15 24h20M15 29h20M2 12h8" stroke="#ccc" /><path d="M1 35h11" stroke="#3e96e8" strokeWidth="2" /><circle cx="37" cy="37" r="8" fill="url(#git)" /><g transform="translate(26 25.500) scale(.5)"><Cat /></g></Svg></div>
      <div className="ml-[9px] mt-[6px]"><Svg><path d="M6 6h32l-4 35q-11 4-24 0z" fill="url(#trash)" stroke="#f2f4f4" /><path d="M7 7l3-5 5 3 5-4 6 3 6-3 5 5-2 4H9z" fill="#d8d8d8" stroke="#777" strokeWidth=".7" /><path d="M13 5l4 3M21 4l3 5M30 4l-4 4M16 9l5-3" stroke="#444" /><path d="M24 6l3 2M11 7l3 1" stroke="#a03b34" /><path d="M14 14l3 25M30 14l-3 25" stroke="#fff" opacity=".6" /></Svg></div>
    </footer>
  );
}

export default function App() {
  return (
    <div className="relative flex h-[1050px] w-[1680px] flex-col overflow-hidden bg-[linear-gradient(90deg,#6d8799,#8197a5_1%,#6f8697_2.500%,#9db6c5_50%,#a3c3d8_98.500%,#8fb2c8)] font-['Inter',sans-serif]">
      <Defs />
      {/* window further back */}
      <div className="absolute left-[4px] top-[88px] h-[897px] w-[1659px] rounded-b-[6px] bg-gradient-to-b from-[#bac8d8] via-[#c4c8d2] to-[#bfc2cc] shadow-[0_0_8px_#3335]" />
      <div className="absolute left-[1645px] top-[499px] h-[244px] w-[2px] bg-[#333]" />
      <span className="absolute left-[1663px] top-[774px] text-[12px] text-white">5</span>
      <div className="absolute left-[37px] top-[985px] h-[65px] w-[8px] border-l border-[#555] bg-[#dcdcdc] text-[10px] text-black"><span className="mt-[50px] block border-t border-black">8</span></div>
      <div className="relative flex flex-col">
        <MenuBar />
        <AppBar />
        <ControlBar />
        <div className="flex h-[898px] items-start"><Toolbar /><DocumentWindow /><PanelDock /></div>
        <MacDock />
      </div>
      <ColorPanel />
      <PathfinderPanel />
      {/* dock tooltip */}
      <div className="absolute left-[301px] top-[942px] flex h-[28px] w-[167px] justify-center rounded-[5px] border border-[#bdbdbd] bg-[#efefef] shadow-[0_1px_3px_#0003]">
        <Fit w={138} className="text-[14px] leading-[26px] text-[#444]">Adobe Illustrator CS4</Fit>
        <svg viewBox="0 0 16 9" className="absolute left-[76px] top-[26px] h-[9px] w-4"><path d="M0 0q3 0 8 8 5-8 8-8" fill="#efefef" stroke="#bdbdbd" strokeWidth=".8" /><path d="M0 0h16" stroke="#efefef" strokeWidth="1.500" /></svg>
      </div>
    </div>
  );
}
